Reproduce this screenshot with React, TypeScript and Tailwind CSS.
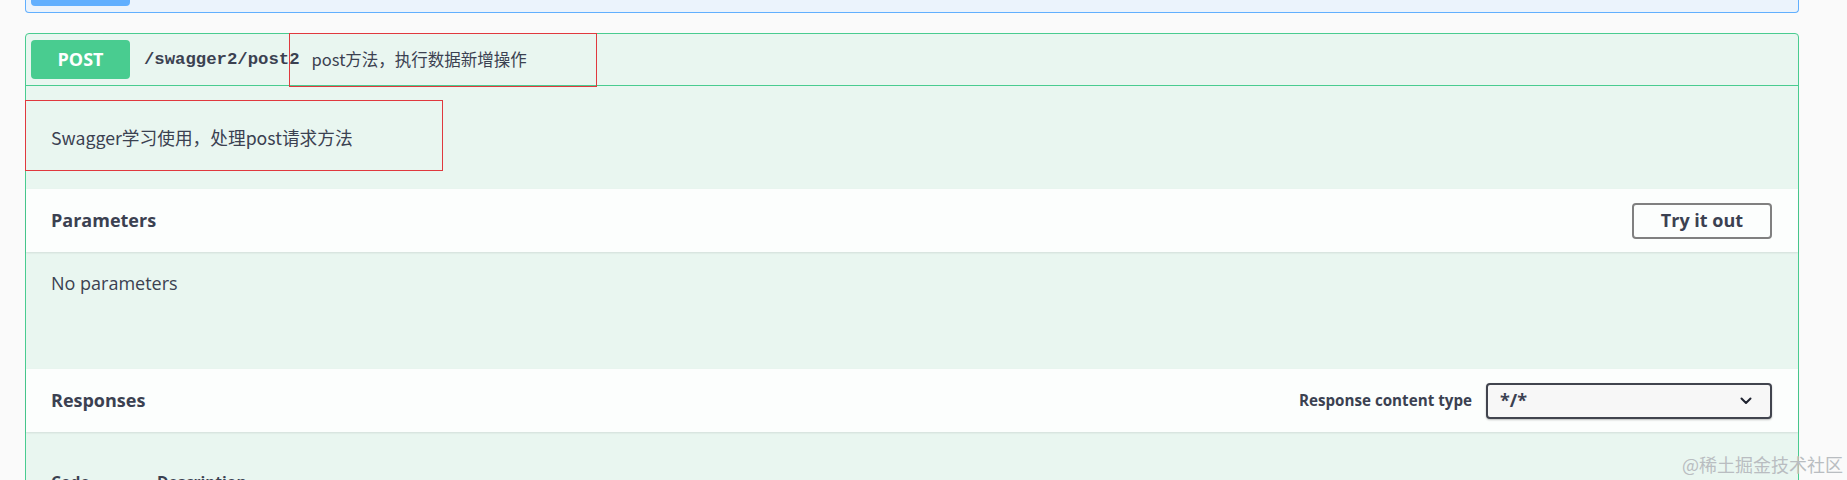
export default function App() {
  return (
    <div className="relative h-[480px] w-full overflow-hidden bg-[#fafafa] font-['Open_Sans','Noto_Sans_CJK_SC',sans-serif] text-[#3b4151]">
      {/* tail of the GET block above */}
      <div className="ml-[25px] h-[13px] w-[1774px] rounded-b-[4px] border-x border-b border-[#61affe] bg-[#ebf3fc] pl-[5px]">
        <div className="h-[6px] w-[99px] rounded-b-[4px] bg-[#61affe]" />
      </div>

      <div className="relative ml-[25px] mt-[20px] w-[1774px] rounded-[4px] border border-[#49cc90] bg-[#e9f6f0]">
        <div className="flex items-center border-b border-[#49cc90] px-[5px] py-[6px]">
          <span className="flex h-[39px] w-[99px] items-center justify-center rounded-[4px] bg-[#49cc90] text-[18px] font-bold text-white">
            POST
          </span>
          <span className="ml-[14px] font-['Liberation_Mono',monospace] text-[17.3px] font-semibold">
            /swagger2/post2
          </span>
          <span className="ml-[12px] font-['Noto_Sans_CJK_SC',sans-serif] text-[16.5px]">
            post方法，执行数据新增操作
          </span>
        </div>

        <div className="px-[25px] pb-[38px] pt-[37px] font-['Noto_Sans_CJK_SC',sans-serif] text-[17.7px] leading-[28px]">
          Swagger学习使用，处理post请求方法
        </div>

        <div className="flex h-[63px] items-center justify-between bg-[#fcfefd] pl-[25px] pr-[26px] shadow-[0_1px_2px_rgba(0,0,0,0.1)]">
          <h4 className="text-[18px] font-bold">Parameters</h4>
          <button className="flex h-[36px] w-[140px] items-center justify-center rounded-[4px] border-2 border-[#808080] text-[18px] font-bold">
            Try it out
          </button>
        </div>

        <div className="px-[25px] pb-[72px] pt-[17px] text-[18px] leading-[28px]">
          No parameters
        </div>

        <div className="flex h-[63px] items-center justify-between bg-[#fcfefd] pl-[25px] pr-[26px] shadow-[0_1px_2px_rgba(0,0,0,0.1)]">
          <h4 className="text-[18px] font-bold">Responses</h4>
          <div className="flex items-center gap-[14px]">
            <span className="text-[15.2px] font-bold">Response content type</span>
            <div className="flex h-[36px] w-[286px] items-center justify-between rounded-[4px] border-2 border-[#41444e] bg-[#f7f7f7] pl-[12px] pr-[18px] shadow-[0_1px_2px_rgba(0,0,0,0.25)]">
              <span className="text-[18px] font-bold">*/*</span>
              <svg width="12" height="8" viewBox="0 0 12 8" fill="none">
                <path d="M1.5 1.5L6 6l4.5-4.5" stroke="#1f2330" strokeWidth="2" strokeLinecap="round" strokeLinejoin="round" />
              </svg>
            </div>
          </div>
        </div>

        <div className="flex px-[25px] pb-[20px] pt-[38px] text-[15.6px] font-bold leading-[24px]">
          <span className="w-[106px]">Code</span>
          <span>Description</span>
        </div>

        {/* red annotation boxes */}
        <div className="absolute left-[263px] top-[-1px] h-[54px] w-[308px] border border-[#e0393e]" />
        <div className="absolute left-[-1px] top-[66px] h-[71px] w-[418px] border border-[#e0393e]" />
      </div>

      <div className="absolute left-[1682px] top-[452px] whitespace-nowrap font-['Noto_Sans_CJK_SC',sans-serif] text-[18px] leading-[24px] text-[#b9bdc1]">
        @稀土掘金技术社区
      </div>
    </div>
  )
}
